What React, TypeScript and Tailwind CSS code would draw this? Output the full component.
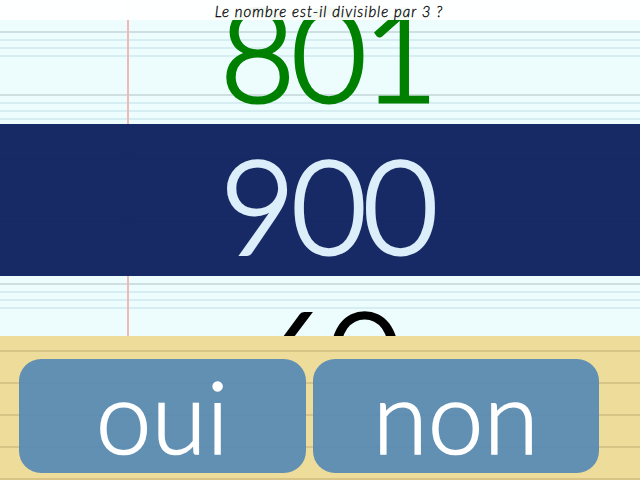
import React from "react";

const rows = [
  { value: "801", className: "text-[#008000]", band: false },
  { value: "900", className: "text-[#dbeefa]", band: true },
  { value: "60", className: "text-black", band: false },
];

export default function App() {
  return (
    <div className="relative w-[640px] h-[480px] overflow-hidden bg-[#edfdfe] font-['Lato',sans-serif]">
      {/* ruled paper */}
      <div className="absolute inset-0 bg-[repeating-linear-gradient(to_bottom,transparent_0px,transparent_31px,#cddfe0_31px,#cddfe0_33px,transparent_33px,transparent_39px,#d6eef1_39px,#d6eef1_41px,transparent_41px,transparent_47px,#d6eef1_47px,#d6eef1_49px,transparent_49px,transparent_55px,#d6eef1_55px,#d6eef1_57px,transparent_57px,transparent_63px)]" />
      <div className="absolute top-0 bottom-0 left-[127px] w-[2px] bg-[#f2b8b8]" />

      <div className="relative flex flex-col -mt-[28px]">
        {rows.map((r) => (
          <div
            key={r.value}
            className={`h-[152px] flex items-center justify-center pl-[14px] ${r.band ? "bg-[#102361]/[0.97]" : ""}`}
          >
            <span className={`text-[130px] font-light tracking-[-4px] leading-none pt-[8px] [-webkit-text-stroke:3px_currentColor] ${r.className}`}>{r.value}</span>
          </div>
        ))}
      </div>

      {/* question header */}
      <div className="absolute top-0 left-0 right-0 h-[20px] bg-white/95 flex items-center justify-center">
        <span className="italic font-light text-[15px] tracking-[1px] leading-none text-black pt-[2px] pl-[18px] [-webkit-text-stroke:0.3px_black]">Le nombre est-il divisible par 3 ?</span>
      </div>

      {/* answer panel */}
      <div className="absolute left-0 right-0 bottom-0 h-[144px] bg-[#eedc9a]">
        <div className="absolute inset-0 bg-[repeating-linear-gradient(to_bottom,transparent_0px,transparent_14px,#d8c486_14px,#d8c486_16px,transparent_16px,transparent_32px)]" />
        <div className="relative flex gap-[7px] pl-[19px] pr-[41px] pt-[23px]">
          <button className="flex-1 h-[114px] rounded-[22px] bg-[#5a8bb4]/95 text-white text-[100px] font-light leading-none flex items-center justify-center pb-[2px] [-webkit-text-stroke:1.5px_white]">
            oui
          </button>
          <button className="flex-1 h-[114px] rounded-[22px] bg-[#5a8bb4]/95 text-white text-[100px] font-light leading-none flex items-center justify-center pb-[2px] [-webkit-text-stroke:1.5px_white]">
            non
          </button>
        </div>
      </div>
    </div>
  );
}
